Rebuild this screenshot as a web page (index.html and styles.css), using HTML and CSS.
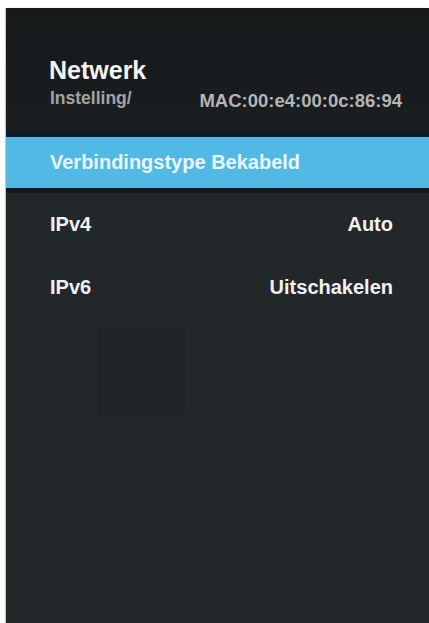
FILE: index.html
```html
<!DOCTYPE html>
<html lang="nl">
<head>
<meta charset="utf-8">
<title>Netwerk</title>
<link rel="stylesheet" href="styles.css">
</head>
<body>
<div class="panel">
  <header class="header">
    <div class="title">Netwerk</div>
    <div class="subrow">
      <span class="crumb">Instelling/</span>
      <span class="mac">MAC:00:e4:00:0c:86:94</span>
    </div>
  </header>
  <div class="sep-top"></div>
  <div class="row selected">Verbindingstype Bekabeld</div>
  <div class="sep-bottom"></div>
  <div class="list">
    <div class="row item"><span>IPv4</span><span>Auto</span></div>
    <div class="row item"><span>IPv6</span><span>Uitschakelen</span></div>
    <div class="ghost"></div>
  </div>
</div>
</body>
</html>
```

FILE: styles.css
```css
html, body {
  margin: 0;
  padding: 0;
  background: #ffffff;
}
body {
  padding: 8px 0 0 6px;
  font-family: "Liberation Sans", Arial, sans-serif;
  font-weight: bold;
}
.panel {
  height: 615px;
  background: #22272a;
  box-shadow: -1px 0 1px #c8c8c8;
  overflow: hidden;
}
.header {
  height: 123px;
  box-sizing: border-box;
  padding: 50px 27px 0 43px;
  background: linear-gradient(#16191a, #191d1f 80%, #1b1f21);
}
.title {
  font-size: 25px;
  line-height: 25px;
  color: #f4f4f4;
}
.subrow {
  display: flex;
  justify-content: space-between;
  align-items: flex-start;
  margin-top: 6px;
  padding-left: 1px;
}
.crumb {
  font-size: 17.5px;
  line-height: 18px;
  color: #a3a3a3;
}
.mac {
  font-size: 18.5px;
  line-height: 18px;
  margin-top: 3px;
  color: #b5b5b5;
}
.sep-top {
  height: 6px;
  background: #0f1b24;
}
.selected {
  height: 51px;
  line-height: 51px;
  padding-left: 44px;
  font-size: 20px;
  color: #e9f5fb;
  background: #52b9e5;
}
.sep-bottom {
  height: 5px;
  background: #12171a;
}
.item {
  display: flex;
  justify-content: space-between;
  height: 63px;
  line-height: 63px;
  padding: 0 36px 0 44px;
  font-size: 20px;
  color: #f1f1f1;
}
.ghost {
  width: 88px;
  height: 88px;
  margin: 8px 0 0 91px;
  background: #202528;
}
```
